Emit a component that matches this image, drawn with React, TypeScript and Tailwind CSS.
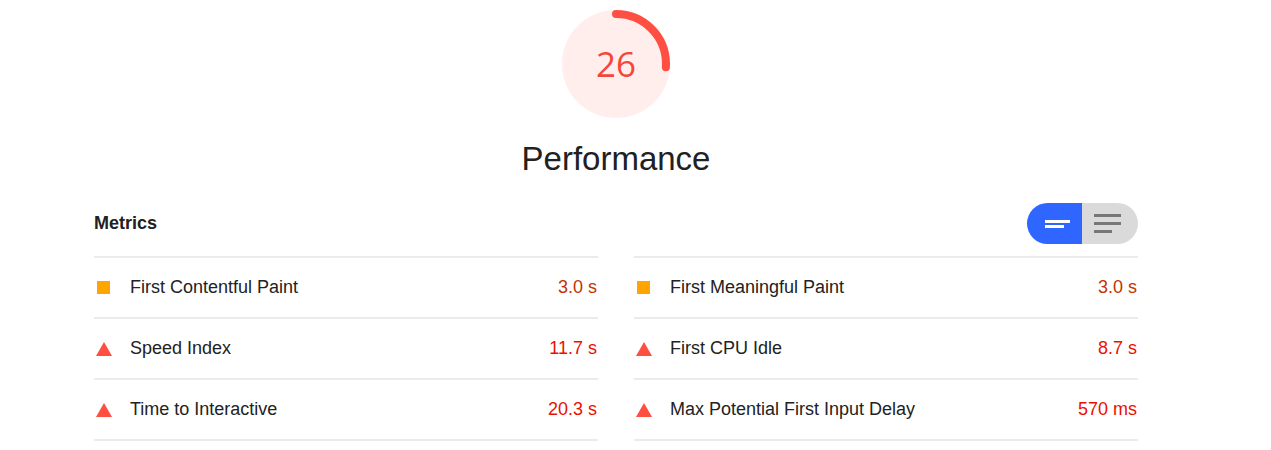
const metrics = [
  { name: "First Contentful Paint", value: "3.0 s", kind: "average" },
  { name: "First Meaningful Paint", value: "3.0 s", kind: "average" },
  { name: "Speed Index", value: "11.7 s", kind: "fail" },
  { name: "First CPU Idle", value: "8.7 s", kind: "fail" },
  { name: "Time to Interactive", value: "20.3 s", kind: "fail" },
  { name: "Max Potential First Input Delay", value: "570 ms", kind: "fail" },
];

const Gauge = ({ score }: { score: number }) => {
  const r = 50;
  const c = 2 * Math.PI * r;
  return (
    <div className="relative w-[112px] h-[112px]">
      <svg width="112" height="112" viewBox="0 0 112 112">
        <circle cx="56" cy="56" r="54" fill="#ffeeec" />
        <circle
          cx="56"
          cy="56"
          r={r}
          fill="none"
          stroke="#ff4e42"
          strokeWidth="8"
          strokeLinecap="round"
          strokeDasharray={`${(c * score) / 100} ${c}`}
          transform="rotate(-90 56 56)"
        />
      </svg>
      <div className="absolute inset-0 flex items-center justify-center text-[35px] text-[#f5463b] font-['Open_Sans',sans-serif]">
        {score}
      </div>
    </div>
  );
};

const Icon = ({ kind }: { kind: string }) =>
  kind === "average" ? (
    <div className="w-[13px] h-[13px] bg-[#ffa400] ml-[3px]" />
  ) : (
    <svg width="16" height="14" viewBox="0 0 16 14" className="ml-[2px]">
      <polygon points="8,0 16,14 0,14" fill="#ff4e42" />
    </svg>
  );

export default function App() {
  return (
    <div className="w-[1232px] bg-white font-['Liberation_Sans',Arial,sans-serif] text-[#212121]">
      <div className="flex flex-col items-center pt-[8px]">
        <Gauge score={26} />
        <h1 className="mt-[19px] text-[33px] leading-[40px]">Performance</h1>
      </div>
      <div className="px-[94px] mt-[24px]">
        <div className="flex items-center justify-between pb-[12px]">
          <span className="text-[18px] font-bold">Metrics</span>
          <div className="flex h-[41px] w-[111px] rounded-full overflow-hidden">
            <div className="w-[55px] bg-[#2e66ff] flex flex-col justify-center pl-[18px] gap-[2px]">
              <div className="w-[25px] h-[3px] bg-white" />
              <div className="w-[19px] h-[3px] bg-white" />
            </div>
            <div className="flex-1 bg-[#dadada] flex flex-col justify-center pl-[12px] gap-[5px]">
              <div className="w-[27px] h-[3px] bg-[#777]" />
              <div className="w-[27px] h-[3px] bg-[#777]" />
              <div className="w-[18px] h-[3px] bg-[#777]" />
            </div>
          </div>
        </div>
        <div className="grid grid-cols-2 gap-x-[36px]">
          {metrics.map((m, i) => (
            <div
              key={m.name}
              className={`flex items-center border-t-2 border-[#ebebeb] ${i >= 4 ? "border-b-2 h-[63px]" : "h-[61px]"}`}
            >
              <div className="w-[36px] flex items-center">
                <Icon kind={m.kind} />
              </div>
              <span className="flex-1 text-[18px] text-[#222]">{m.name}</span>
              <span
                className={`text-[18px] pr-[1px] ${m.kind === "average" ? "text-[#c33300]" : "text-[#eb0f00]"}`}
              >
                {m.value}
              </span>
            </div>
          ))}
        </div>
      </div>
    </div>
  );
}
